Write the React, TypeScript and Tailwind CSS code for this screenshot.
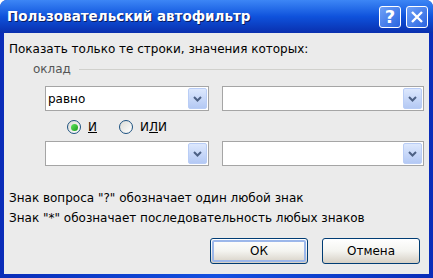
import React from 'react';

function Chevron() {
  return (
    <svg width="9" height="6" viewBox="0 0 9 6">
      <path d="M1 1 L4.5 4.5 L8 1" fill="none" stroke="#4d6185" strokeWidth="2" />
    </svg>
  );
}

function Combo({ value, width }: { value?: string; width: string }) {
  return (
    <div className={`${width} h-[25px] flex border border-[#a5a5a5] bg-white`}>
      <div className="flex-1 flex items-center pl-[2px] text-[12px] text-black">{value}</div>
      <div className="w-[19px] my-[1px] mr-[1px] flex items-center justify-center rounded-[2px] border border-[#b9cdf6] bg-gradient-to-b from-[#dde8fd] to-[#b4c9f4]">
        <Chevron />
      </div>
    </div>
  );
}

function Radio({ checked, children }: { checked?: boolean; children: React.ReactNode }) {
  return (
    <div className="flex items-center gap-[7px]">
      <div className="w-[14px] h-[14px] rounded-full border border-[#1c5180] bg-gradient-to-br from-[#dcdcd6] to-white flex items-center justify-center">
        {checked && <div className="w-[7px] h-[7px] rounded-full bg-gradient-to-br from-[#5fe85f] to-[#1a9b1a]" />}
      </div>
      <span className="text-[12px] text-black">{children}</span>
    </div>
  );
}

function XPButton({ label, focused }: { label: string; focused?: boolean }) {
  return (
    <div className="w-[98px] h-[26px] rounded-[3px] border border-[#003c74] bg-gradient-to-b from-white via-[#f4f4f0] to-[#d6d0c5] p-[1px]">
      <div className={`w-full h-full rounded-[2px] flex items-center justify-center text-[12px] text-black ${focused ? 'border-2 border-[#9cb7ea]' : 'border border-transparent'}`}>
        {label}
      </div>
    </div>
  );
}

export default function App() {
  return (
    <div className="w-[433px] h-[278px] flex flex-col rounded-t-[7px] overflow-hidden bg-gradient-to-r from-[#0a2cb8] via-[#1450e0] to-[#0a2cb8]" style={{ fontFamily: '"DejaVu Sans", Verdana, sans-serif' }}>
      {/* title bar */}
      <div className="h-[33px] shrink-0 flex items-center pl-[7px] pr-[5px] bg-gradient-to-b from-[#3d86f5] via-[#0f52dc] to-[#0a2fae]">
        <span className="flex-1 text-white font-bold text-[13.5px] [text-shadow:1px_1px_0_#0a1c60]">Пользовательский автофильтр</span>
        <div className="flex gap-[5px]">
          <div className="w-[22px] h-[22px] rounded-[3px] border border-white bg-gradient-to-br from-[#6ea0f7] to-[#2a63e0] flex items-center justify-center text-white font-bold text-[18px] leading-none">?</div>
          <div className="w-[22px] h-[22px] rounded-[3px] border border-white bg-gradient-to-br from-[#6ea0f7] to-[#2a63e0] flex items-center justify-center">
            <svg width="14" height="14" viewBox="0 0 14 14">
              <path d="M2 2 L12 12 M12 2 L2 12" stroke="white" strokeWidth="2.4" />
            </svg>
          </div>
        </div>
      </div>

      {/* client */}
      <div className="flex-1 mx-[4px] mb-[4px] bg-[#ebebeb] flex flex-col text-[12px] text-black">
        <div className="pl-[5px] pt-[7px] h-[29px]">Показать только те строки, значения которых:</div>

        <div className="flex items-center pl-[29px] pr-[7px] h-[14px]">
          <span className="text-[#555]">оклад</span>
          <div className="flex-1 ml-[8px] h-px bg-[#d0d0cc]" />
        </div>

        <div className="flex gap-[13px] pl-[41px] mt-[10px]">
          <Combo value="равно" width="w-[164px]" />
          <Combo width="w-[202px]" />
        </div>

        <div className="flex gap-[22px] pl-[63px] mt-[9px] h-[14px]">
          <Radio checked>
            <span className="underline">И</span>
          </Radio>
          <Radio>
            И<span className="underline">Л</span>И
          </Radio>
        </div>

        <div className="flex gap-[13px] pl-[41px] mt-[7px]">
          <Combo width="w-[164px]" />
          <Combo width="w-[202px]" />
        </div>

        <div className="pl-[5px] mt-[22px] leading-[20px]">
          <div>Знак вопроса "?" обозначает один любой знак</div>
          <div>Знак "*" обозначает последовательность любых знаков</div>
        </div>

        <div className="flex justify-end gap-[14px] pr-[9px] mt-[10px]">
          <XPButton label="ОК" focused />
          <XPButton label="Отмена" />
        </div>
      </div>
    </div>
  );
}
